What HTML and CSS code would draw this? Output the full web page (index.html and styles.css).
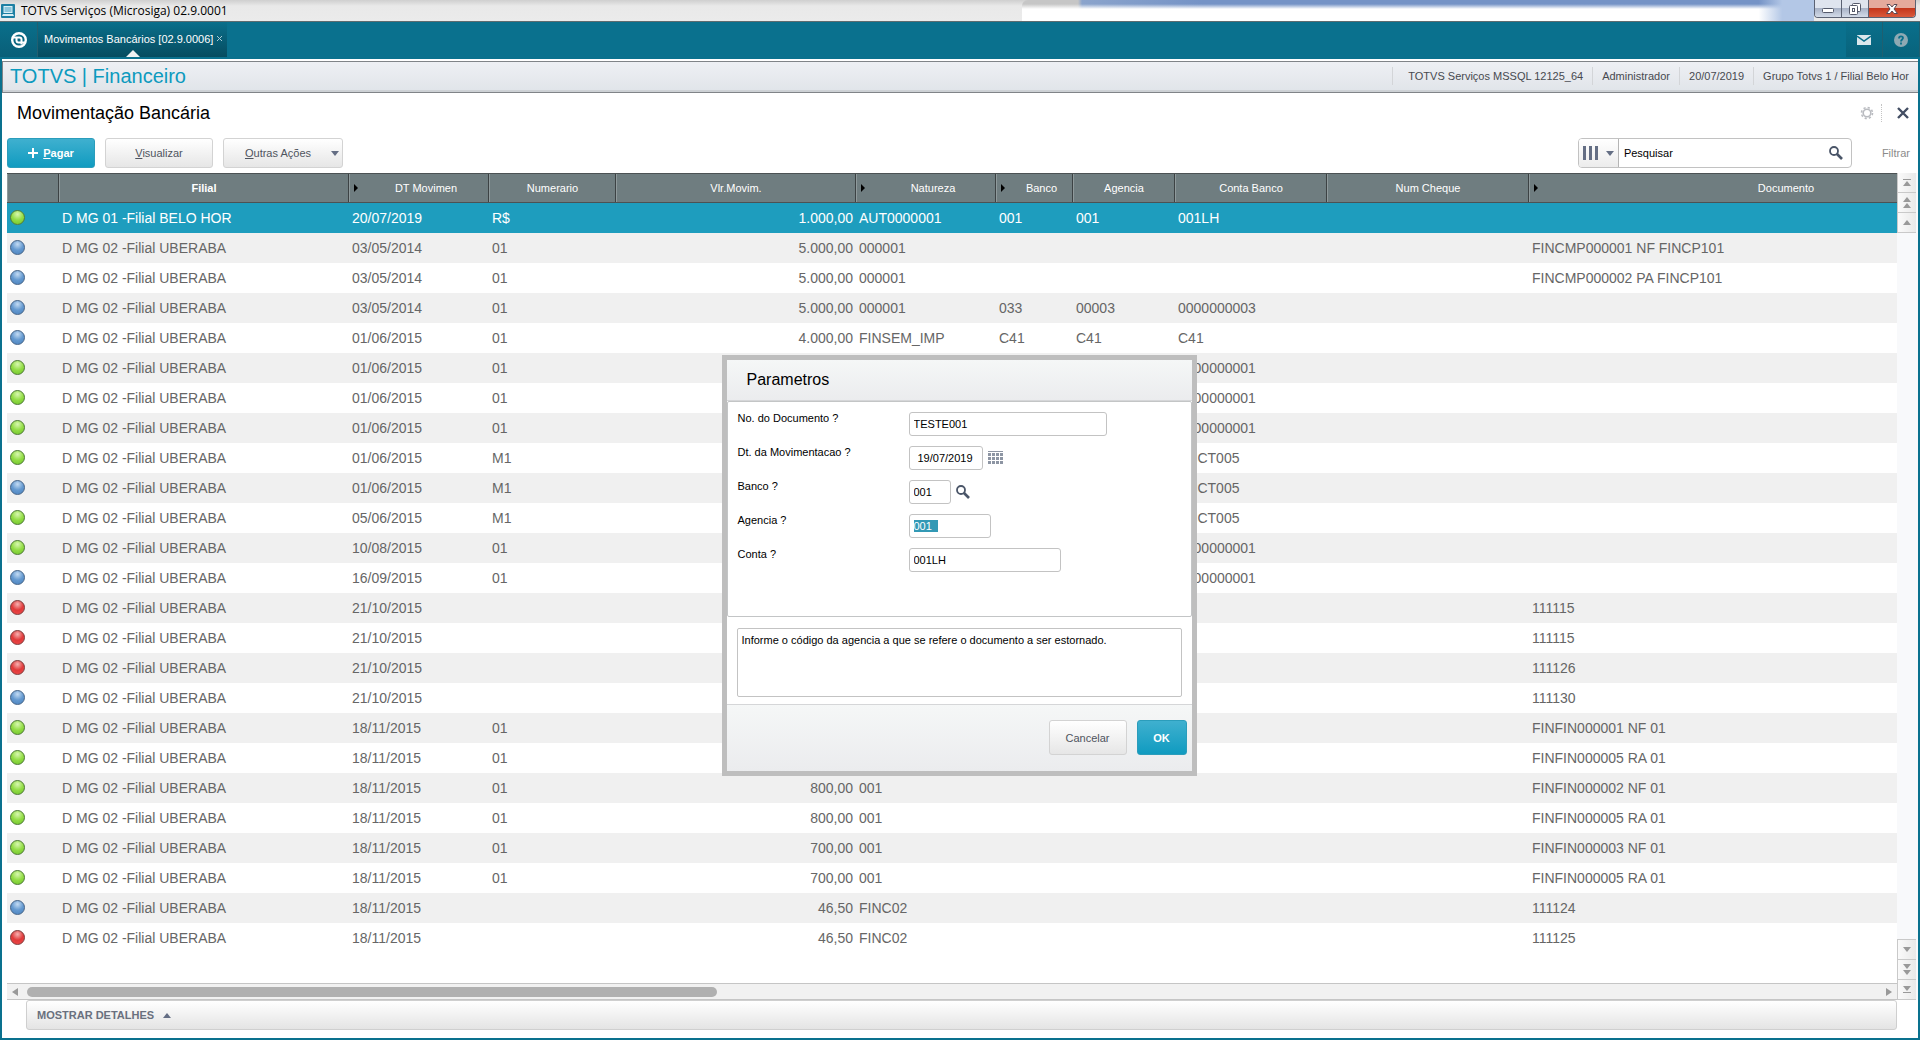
FILE: index.html
```html
<!DOCTYPE html>
<html lang="pt-BR">
<head>
<meta charset="utf-8">
<title>TOTVS Serviços (Microsiga) 02.9.0001</title>
<link rel="stylesheet" href="styles.css">
</head>
<body>
<header class="titlebar">
    <svg class="app-icon" width="16" height="16" viewBox="0 0 16 16">
        <rect x="1" y="1" width="14" height="14" rx="1" fill="#1d7fa3"/>
        <rect x="4" y="3.500" width="8" height="6" fill="#8cc6dc" stroke="#d9eef5"/>
        <path d="M2 13l1-2h10l1 2z" fill="#d9eef5"/>
    </svg>
    <span class="window-title">TOTVS Serviços (Microsiga) 02.9.0001</span>
    <div class="glass"></div>
    <div class="window-buttons">
        <button aria-label="Minimizar"><svg width="14" height="14" viewBox="0 0 14 14"><rect x="1.500" y="6.500" width="11" height="4" rx="1" fill="#fff" stroke="#555a6b"/></svg></button>
        <button aria-label="Restaurar"><svg width="14" height="14" viewBox="0 0 14 14"><g fill="#fff" stroke="#555a6b"><rect x="4.500" y="1.500" width="8" height="8" rx="1"/><rect x="1.500" y="3.500" width="8" height="9" rx="1"/><rect x="4.500" y="6.500" width="2" height="3"/></g></svg></button>
        <button class="win-close" aria-label="Fechar"><svg width="14" height="14" viewBox="0 0 14 14"><path d="M2 2.500h3l2 2.500 2-2.500h3L9 7l3.500 4.500H9L7 9l-2 2.500H1.500L5 7z" fill="#fff" stroke="#5a4a55"/></svg></button>
    </div>
</header>

<nav class="appbar">
    <button class="home" aria-label="Início">
        <svg width="18" height="18" viewBox="0 0 18 18"><circle cx="9" cy="9" r="6.800" fill="none" stroke="#fff" stroke-width="2.400"/><path d="M3 6.500h6.500c1.500 0 2 1 2 2v5M15 11.500H8.500c-1.500 0-2-1-2-2v-3" fill="none" stroke="#fff" stroke-width="2"/></svg>
    </button>
    <div class="tab">
        <a href="#">Movimentos Bancários [02.9.0006]</a>
        <button aria-label="Fechar aba"><svg width="7" height="7" viewBox="0 0 7 7"><path d="M1 1l5 5M6 1L1 6" stroke="#a9ccd6"/></svg></button>
    </div>
    <div class="tools">
        <button aria-label="Mensagens"><svg width="14" height="10" viewBox="0 0 14 10"><rect width="14" height="10" fill="#dbe7ec"/><path d="M0 1l7 5 7-5" fill="none" stroke="#0a6f8b" stroke-width="1.500"/></svg></button>
        <button aria-label="Ajuda"><svg width="14" height="14" viewBox="0 0 14 14"><circle cx="7" cy="7" r="7" fill="#8fa9b3"/><path d="M5 5.500c0-3 4-2.700 4-.5 0 1.500-2 1.500-2 3.500M7 9.500v2" fill="none" stroke="#0a6f8b" stroke-width="1.800"/></svg></button>
    </div>
</nav>

<div class="window">
    <div class="brandbar">
        <h1>TOTVS | Financeiro</h1>
        <ul class="session">
            <li>TOTVS Serviços MSSQL 12125_64</li>
            <li>Administrador</li>
            <li>20/07/2019</li>
            <li>Grupo Totvs 1 / Filial Belo Hor</li>
        </ul>
    </div>

    <div class="heading">
        <h2>Movimentação Bancária</h2>
        <button class="gear" aria-label="Configurações"><svg width="14" height="14" viewBox="0 0 14 14"><circle cx="7" cy="7" r="3.800" fill="none" stroke="#b9bbc0" stroke-width="1.600"/><circle cx="7" cy="7" r="5.500" fill="none" stroke="#b9bbc0" stroke-width="1.600" stroke-dasharray="2.200 2.120"/></svg></button>
        <button class="close" aria-label="Fechar"><svg width="12" height="12" viewBox="0 0 12 12"><path d="M1 1l10 10M11 1L1 11" stroke="#434e63" stroke-width="2.400"/></svg></button>
    </div>

    <div class="toolbar">
        <button class="btn btn-primary btn-pay"><svg width="10" height="10" viewBox="0 0 10 10"><path d="M5 0v10M0 5h10" stroke="#fff" stroke-width="2"/></svg><span><u>P</u>agar</span></button>
        <button class="btn btn-view"><span><u>V</u>isualizar</span></button>
        <button class="btn btn-more"><span><u>O</u>utras Ações</span><i class="tri down dark"></i></button>
        <div class="search">
            <button class="columns" aria-label="Colunas"><svg width="15" height="14" viewBox="0 0 15 14"><path d="M0 0h3v14H0zM6 0h3v14H6zM12 0h3v14h-3z" fill="#646e84"/></svg><i class="tri down dark"></i></button>
            <input type="text" value="Pesquisar" aria-label="Pesquisar">
            <button class="find" aria-label="Buscar"><svg width="14" height="14" viewBox="0 0 14 14"><circle cx="5" cy="5" r="4" fill="none" stroke="#4a5568" stroke-width="1.800"/><path d="M8 8l5 5" stroke="#4a5568" stroke-width="2.600"/></svg></button>
        </div>
        <a class="filter" href="#">Filtrar</a>
    </div>

    <div class="grid">
        <div class="grid-main">
            <div class="grid-view">
                <table>
                    <colgroup>
                        <col class="c-status"><col class="c-filial"><col class="c-date"><col class="c-num"><col class="c-value"><col class="c-nat">
                        <col class="c-bank"><col class="c-agency"><col class="c-account"><col class="c-check"><col class="c-doc">
                    </colgroup>
                    <thead>
                        <tr>
                            <th></th>
                            <th class="active">Filial</th>
                            <th class="key">DT Movimen</th>
                            <th>Numerario</th>
                            <th>Vlr.Movim.</th>
                            <th class="key">Natureza</th>
                            <th class="key">Banco</th>
                            <th>Agencia</th>
                            <th>Conta Banco</th>
                            <th>Num Cheque</th>
                            <th class="key">Documento</th>
                        </tr>
                    </thead>
                    <tbody id="rows"></tbody>
                </table>
            </div>
            <div class="hscroll">
                <i class="tri left"></i>
                <div class="track"><div class="thumb"></div></div>
                <i class="tri right"></i>
            </div>
        </div>
        <div class="vscroll">
            <button aria-label="Primeiro"><i class="line"></i><i class="tri up"></i></button>
            <button aria-label="Página anterior"><i class="tri up"></i><i class="tri up"></i></button>
            <button aria-label="Anterior"><i class="tri up"></i></button>
            <div class="gutter"></div>
            <button aria-label="Próximo"><i class="tri down"></i></button>
            <button aria-label="Próxima página"><i class="tri down"></i><i class="tri down"></i></button>
            <button aria-label="Último"><i class="tri down"></i><i class="line"></i></button>
        </div>
    </div>

    <button class="details">MOSTRAR DETALHES <i class="tri up dark"></i></button>
</div>

<div class="overlay">
    <form class="dialog" role="dialog" aria-labelledby="dlg-title">
        <h3 id="dlg-title">Parametros</h3>
        <div class="fields">
            <div class="field"><label for="doc">No. do Documento ?</label><input class="w-doc" id="doc" type="text" value="TESTE001"></div>
            <div class="field"><label for="date">Dt. da Movimentacao ?</label><input class="w-date" id="date" type="text" value="19/07/2019">
                <button type="button" aria-label="Calendário"><svg width="15" height="14" viewBox="0 0 15 14"><path d="M0 .5h15" stroke="#8d95a3"/><path d="M0 3.500h15M0 7.500h15M0 11.500h15" stroke="#8d95a3" stroke-width="3" stroke-dasharray="3 1"/></svg></button></div>
            <div class="field"><label for="bank">Banco ?</label><input class="w-bank" id="bank" type="text" value="001">
                <button type="button" aria-label="Pesquisar banco"><svg width="14" height="14" viewBox="0 0 14 14"><circle cx="5" cy="5" r="4" fill="none" stroke="#4a5568" stroke-width="1.800"/><path d="M8 8l5 5" stroke="#4a5568" stroke-width="2.600"/></svg></button></div>
            <div class="field"><label for="agency">Agencia ?</label><input class="w-agency" id="agency" type="text" value="001  "></div>
            <div class="field"><label for="account">Conta ?</label><input class="w-account" id="account" type="text" value="001LH"></div>
        </div>
        <textarea class="help" aria-label="Ajuda do campo" readonly>Informe o código da agencia a que se refere o documento a ser estornado.</textarea>
        <div class="actions">
            <button type="button" class="btn btn-cancel">Cancelar</button>
            <button type="button" class="btn btn-primary btn-ok">OK</button>
        </div>
    </form>
</div>
<script src="script.js"></script>
</body>
</html>
```
FILE: styles.css
```css
* {
    box-sizing: border-box;
}

html, body {
    height: 100%;
    margin: 0;
}

body {
    display: flex;
    flex-direction: column;
    overflow: hidden;
    background: #0a718e;
    font-family: "Liberation Sans", Arial, sans-serif;
    font-size: 11px;
    color: #000;
}

button, input, textarea {
    font: inherit;
    color: inherit;
    margin: 0;
}

button {
    display: flex;
    align-items: center;
    justify-content: center;
    padding: 0;
    border: 0;
    background: none;
}

svg {
    display: block;
    flex: none;
}

h1, h2, h3, ul {
    margin: 0;
    padding: 0;
    font-weight: normal;
}

/* little arrows */

.tri {
    flex: none;
    border: 4px solid transparent;
    color: #999;
}

.tri.dark {
    color: #646e84;
}

.tri.up {
    border-top: 0;
    border-bottom: 5px solid;
    border-bottom-color: currentColor;
}

.tri.down {
    border-bottom: 0;
    border-top: 5px solid;
    border-top-color: currentColor;
}

.tri.left {
    border-left: 0;
    border-right: 6px solid;
}

.tri.right {
    border-right: 0;
    border-left: 6px solid;
}

/* title bar */

.titlebar {
    display: flex;
    flex: none;
    height: 22px;
    padding-right: 4px;
    border-bottom: 1px solid #5e6c70;
    background: linear-gradient(#cfcfcf, #e9e9e9 6px, #ebebeb);
}

.app-icon {
    margin-top: 3px;
}

.window-title {
    width: 1006px;
    padding-left: 5px;
    font: 12px/21px "Open Sans", sans-serif;
}

.glass {
    flex: 1;
    border-top-left-radius: 6px;
    background:
        linear-gradient(to right, transparent 93%, #b3c7e6 96%),
        linear-gradient(transparent 4px, #fff 9px),
        linear-gradient(to right, #c6c6c6 56px, #8ba4cc 60px, #7593c6 180px);
}

.window-buttons {
    display: flex;
    height: 18px;
    border: 1px solid #5b6273;
    border-top: 0;
    border-radius: 0 0 4px 4px;
    overflow: hidden;
}

.window-buttons button {
    width: 27px;
    border-right: 1px solid #5b6273;
    background: linear-gradient(#dfe4ee 50%, #a9b3c7 50%, #d3dbe8);
}

.window-buttons .win-close {
    width: 46px;
    border: 0;
    background: linear-gradient(#e5aa9c 45%, #c4371c 50%, #d9593b);
}

/* application bar */

.appbar {
    display: flex;
    flex: none;
    height: 37px;
}

.appbar .home {
    width: 38px;
    height: 35px;
    background: linear-gradient(#0a6f8b, #095f78);
    border-right: 1px solid #235f70;
}

.tab {
    position: relative;
    display: flex;
    align-items: center;
    gap: 3px;
    height: 35px;
    padding: 0 4px 2px 6px;
    background: linear-gradient(#0a6f8b, #064c60);
}

.tab a {
    color: #fff;
    text-decoration: none;
}

.tab::after {
    content: '';
    position: absolute;
    left: 50%;
    bottom: 0;
    margin-left: -7px;
    border: 7px solid transparent;
    border-top: 0;
    border-bottom-color: #eef1f2;
}

.tools {
    display: flex;
    margin-left: auto;
}

.tools button {
    width: 37px;
    height: 35px;
    border-right: 1px solid #1f5f70;
    background: linear-gradient(#0a6f8b, #08637c);
}

/* window body */

.window {
    display: flex;
    flex: 1;
    flex-direction: column;
    min-height: 0;
    margin: 0 2px 2px;
    padding-top: 2px;
    background: #fff;
}

.brandbar {
    display: flex;
    flex: none;
    align-items: center;
    height: 32px;
    padding: 0 9px 2px 7px;
    border: 1px solid #808488;
    border-right: 0;
    background: linear-gradient(#eef0f4, #e0e4e9);
    box-shadow: inset 0 -2px #cdd1d5;
}

.brandbar h1 {
    color: #0c9abe;
    font-size: 20px;
}

.session {
    display: flex;
    margin-left: auto;
    list-style: none;
    color: #47494f;
}

.session li {
    padding: 0 9px;
    border-left: 1px solid #d3d5d8;
    line-height: 18px;
}

.session li:first-child {
    padding-left: 15px;
}

.session li:last-child {
    padding-right: 0;
}

.heading {
    display: flex;
    flex: none;
    align-items: center;
    height: 40px;
    padding: 0 9px 0 15px;
}

.heading h2 {
    flex: 1;
    font-size: 18px;
}

.gear {
    height: 18px;
    padding-right: 7px;
    border-right: 1px dotted #c4c4c4;
}

.close {
    padding-left: 15px;
}

/* toolbar */

.toolbar {
    display: flex;
    flex: none;
    gap: 10px;
    height: 40px;
    padding: 5px 8px 5px 5px;
}

.btn {
    border: 1px solid #d3d3d3;
    border-radius: 3px;
    background: linear-gradient(#fff, #e6e6e6);
    color: #4f545e;
}

.btn-primary {
    border-color: #2b9dbb;
    background: linear-gradient(#3fb0cf, #109bc0);
    color: #fff;
    font-weight: bold;
}

.btn-pay {
    gap: 5px;
    width: 88px;
}

.btn-view {
    width: 108px;
}

.btn-more {
    gap: 20px;
    width: 120px;
    padding-left: 18px;
}

.search {
    display: flex;
    width: 274px;
    margin-left: auto;
    border: 1px solid #c2c2c2;
    border-radius: 4px;
    overflow: hidden;
}

.search .columns {
    gap: 8px;
    width: 40px;
    border-right: 1px solid #b5b5b5;
    background: linear-gradient(#fff, #ececec);
}

.search input {
    flex: 1;
    min-width: 0;
    padding: 0 5px;
    border: 0;
}

.search .find {
    width: 30px;
}

.filter {
    padding-left: 20px;
    color: #8b8b8b;
    line-height: 30px;
    text-decoration: none;
}

/* browse */

.grid {
    display: flex;
    flex: 1;
    min-height: 0;
    padding-left: 5px;
}

.grid-main {
    display: flex;
    flex: 1;
    flex-direction: column;
    min-width: 0;
}

.grid-view {
    flex: 1;
    overflow: hidden;
}

table {
    width: 2022px;
    border-collapse: collapse;
    table-layout: fixed;
}

.c-status { width: 52px; }
.c-filial { width: 290px; }
.c-date { width: 140px; }
.c-num { width: 127px; }
.c-value { width: 240px; }
.c-nat { width: 140px; }
.c-bank { width: 77px; }
.c-agency { width: 102px; }
.c-account { width: 152px; }
.c-check { width: 202px; }
.c-doc { width: 500px; }

th {
    position: relative;
    height: 29px;
    padding: 0;
    border: solid #4c5254;
    border-width: 1px 0;
    background: #6f7d80;
    box-shadow: inset -1px 0 #3c4244, inset 1px 0 #8f9a9c;
    color: #fff;
    font-weight: normal;
}

th.active {
    font-weight: bold;
}

th.key {
    padding-left: 14px;
}

th.key::before {
    content: '';
    position: absolute;
    left: 5px;
    top: 10px;
    border: 4px solid transparent;
    border-right: 0;
    border-left-color: #000;
}

td {
    height: 30px;
    padding: 0 3px;
    color: #666;
    font-size: 14px;
    white-space: pre;
}

tbody tr:nth-child(even) {
    background: #f0f0f0;
}

tbody tr.selected {
    background: #1e9dbe;
}

.selected td {
    color: #fff;
}

.num {
    text-align: right;
}

.dot {
    display: block;
    width: 15px;
    height: 15px;
    border: 1px solid #4f7a3a;
    border-radius: 50%;
    background: radial-gradient(circle at 50% 25%, #d8f7b0, #93dd45 50%, #6fc32a);
}

.dot.blue {
    border-color: #4a6788;
    background: radial-gradient(circle at 50% 25%, #c3dbf3, #6499d0 50%, #4a82bd);
}

.dot.red {
    border-color: #7d4040;
    background: radial-gradient(circle at 50% 25%, #f6b0b0, #e03a3a 50%, #f04848);
}

.hscroll {
    display: flex;
    flex: none;
    align-items: center;
    gap: 9px;
    height: 17px;
    padding: 0 5px;
    border: solid #c5c5c5;
    border-width: 1px 0;
    background: #f1f1f1;
}

.track {
    flex: 1;
}

.thumb {
    width: 37.3%;
    height: 10px;
    border-radius: 5px;
    background: #b0b0b0;
}

.vscroll {
    display: flex;
    flex-direction: column;
    width: 21px;
    padding-right: 2px;
    background: #f8f9fb;
}

.vscroll button {
    flex-direction: column;
    gap: 1px;
    height: 20px;
    border: 1px solid #c9c9c9;
    border-width: 0 0 1px 1px;
    background: linear-gradient(to right, #fafafa, #e9e9e9);
}

.gutter {
    flex: 1;
    border-bottom: 1px solid #c9c9c9;
}

.line {
    width: 8px;
    height: 1px;
    background: #999;
}

.details {
    flex: none;
    justify-content: flex-start;
    gap: 9px;
    height: 30px;
    margin: 0 21px 8px 24px;
    padding-left: 10px;
    border: 1px solid #cfcfcf;
    border-radius: 3px;
    background: linear-gradient(#fff, #e4e4e4);
    color: #69707e;
    font-weight: bold;
}

/* parameters dialog */

.overlay {
    position: absolute;
    inset: 0;
    display: flex;
    align-items: flex-start;
    justify-content: center;
    padding: 355px 2px 0 0;
}

.dialog {
    width: 475px;
    border: 5px solid #bebebe;
    background: #fff;
}

.dialog h3 {
    padding: 0 20px;
    border-bottom: 1px solid #d5d6d8;
    background: linear-gradient(#f5f7f7, #ebecee);
    font-size: 16px;
    line-height: 40px;
}

.fields {
    display: flex;
    flex-direction: column;
    gap: 10px;
    height: 216px;
    padding: 10px;
    border: 1px solid #c3c5c6;
    border-radius: 2px;
}

.field {
    display: flex;
    align-items: center;
    gap: 5px;
}

.field label {
    align-self: flex-start;
    width: 166px;
}

.field input {
    height: 24px;
    padding: 0 4px;
    border: 1px solid #c3c3c3;
    border-radius: 3px;
    outline: 0;
}

.field input::selection {
    background: #3399b5;
    color: #fff;
}

.field .w-doc { width: 198px; }
.field .w-date { width: 74px; padding-left: 8px; }
.field .w-bank { width: 42px; }
.field .w-agency { width: 82px; }
.field .w-account { width: 152px; }

.help {
    display: block;
    width: 445px;
    height: 69px;
    margin: 11px 10px 7px;
    padding: 5px 4px;
    border: 1px solid #c3c3c3;
    border-radius: 2px;
    resize: none;
}

.actions {
    display: flex;
    justify-content: flex-end;
    gap: 10px;
    height: 67px;
    padding: 15px 5px;
    border-top: 1px solid #d5d6d8;
    background: linear-gradient(#f5f7f7, #ebecee);
}

.actions .btn {
    height: 35px;
}

.btn-cancel {
    width: 78px;
}

.btn-ok {
    width: 50px;
}
```
FILE: script.js
```js
// status, filial, date, numerario, value, natureza, banco, agencia, conta, cheque, documento
const UBE = 'D MG 02 -Filial UBERABA';
const data = [
    ['green', 'D MG 01 -Filial BELO HOR', '20/07/2019', 'R$', '1.000,00', 'AUT0000001', '001', '001', '001LH', '', ''],
    ['blue', UBE, '03/05/2014', '01', '5.000,00', '000001', '', '', '', '', 'FINCMP000001 NF FINCP101'],
    ['blue', UBE, '03/05/2014', '01', '5.000,00', '000001', '', '', '', '', 'FINCMP000002 PA FINCP101'],
    ['blue', UBE, '03/05/2014', '01', '5.000,00', '000001', '033', '00003', '0000000003', '', ''],
    ['blue', UBE, '01/06/2015', '01', '4.000,00', 'FINSEM_IMP', 'C41', 'C41', 'C41', '', ''],
    ['green', UBE, '01/06/2015', '01', '', '', '', '', '0000000001', '', ''],
    ['green', UBE, '01/06/2015', '01', '', '', '', '', '0000000001', '', ''],
    ['green', UBE, '01/06/2015', '01', '', '', '', '', '0000000001', '', ''],
    ['green', UBE, '01/06/2015', 'M1', '', '', '', '', 'ACCT005', '', ''],
    ['blue', UBE, '01/06/2015', 'M1', '', '', '', '', 'ACCT005', '', ''],
    ['green', UBE, '05/06/2015', 'M1', '', '', '', '', 'ACCT005', '', ''],
    ['green', UBE, '10/08/2015', '01', '', '', '', '', '0000000001', '', ''],
    ['blue', UBE, '16/09/2015', '01', '', '', '', '', '0000000001', '', ''],
    ['red', UBE, '21/10/2015', '', '', '', '', '', '', '', '111115'],
    ['red', UBE, '21/10/2015', '', '', '', '', '', '', '', '111115'],
    ['red', UBE, '21/10/2015', '', '', '', '', '', '', '', '111126'],
    ['blue', UBE, '21/10/2015', '', '', '', '', '', '', '', '111130'],
    ['green', UBE, '18/11/2015', '01', '', '', '', '', '', '', 'FINFIN000001 NF 01'],
    ['green', UBE, '18/11/2015', '01', '', '', '', '', '', '', 'FINFIN000005 RA 01'],
    ['green', UBE, '18/11/2015', '01', '800,00', '001', '', '', '', '', 'FINFIN000002 NF 01'],
    ['green', UBE, '18/11/2015', '01', '800,00', '001', '', '', '', '', 'FINFIN000005 RA 01'],
    ['green', UBE, '18/11/2015', '01', '700,00', '001', '', '', '', '', 'FINFIN000003 NF 01'],
    ['green', UBE, '18/11/2015', '01', '700,00', '001', '', '', '', '', 'FINFIN000005 RA 01'],
    ['blue', UBE, '18/11/2015', '', '46,50', 'FINC02', '', '', '', '', '111124'],
    ['red', UBE, '18/11/2015', '', '46,50', 'FINC02', '', '', '', '', '111125'],
];

document.getElementById('rows').innerHTML = data.map(([status, ...cells], i) => {
    const tds = cells.map((c, n) => `<td${n === 3 ? ' class="num"' : ''}>${c}</td>`).join('');
    return `<tr${i === 0 ? ' class="selected"' : ''}><td><i class="dot ${status}"></i></td>${tds}</tr>`;
}).join('');

const agency = document.getElementById('agency');
agency.focus();
agency.select();
```
